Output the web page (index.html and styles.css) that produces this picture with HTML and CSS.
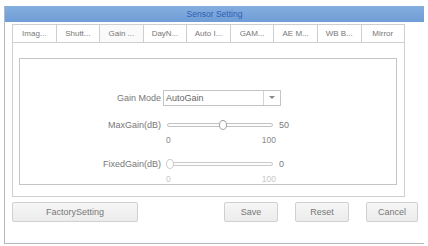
FILE: index.html
```html
<!DOCTYPE html>
<html lang="en">
<head>
    <meta charset="UTF-8">
    <title>Sensor Setting</title>
    <link rel="stylesheet" href="styles.css">
</head>
<body>
    <div class="window">
        <div class="titlebar">Sensor Setting</div>

        <div class="tabs">
            <div class="tab">Imag...</div>
            <div class="tab">Shutt...</div>
            <div class="tab active">Gain ...</div>
            <div class="tab">DayN...</div>
            <div class="tab">Auto I...</div>
            <div class="tab">GAM...</div>
            <div class="tab">AE M...</div>
            <div class="tab">WB B...</div>
            <div class="tab">Mirror</div>
        </div>

        <div class="panel">
            <div class="group">
                <div class="row row-select">
                    <label class="lbl">Gain Mode</label>
                    <div class="select">
                        <span class="select-text">AutoGain</span>
                        <span class="select-arrow"></span>
                    </div>
                </div>

                <div class="row row-slider">
                    <label class="lbl">MaxGain(dB)</label>
                    <div class="slider">
                        <div class="track"></div>
                        <div class="thumb" style="left: 50%;"></div>
                    </div>
                    <span class="value">50</span>
                </div>
                <div class="scale">
                    <span>0</span>
                    <span>100</span>
                </div>

                <div class="row row-slider">
                    <label class="lbl">FixedGain(dB)</label>
                    <div class="slider disabled">
                        <div class="track"></div>
                        <div class="thumb" style="left: 0%;"></div>
                    </div>
                    <span class="value">0</span>
                </div>
                <div class="scale disabled">
                    <span>0</span>
                    <span>100</span>
                </div>
            </div>
        </div>

        <div class="buttons">
            <button class="btn btn-factory">FactorySetting</button>
            <div class="spacer"></div>
            <button class="btn">Save</button>
            <button class="btn">Reset</button>
            <button class="btn btn-cancel">Cancel</button>
        </div>
    </div>
</body>
</html>
```

FILE: styles.css
```css
body {
    margin: 0;
    background-color: white;
    font-family: "Liberation Sans", Arial, sans-serif;
    color: #777;
}
.window {
    margin: 6px 0 0 4px;
    width: 420px;
    height: 238px;
    box-sizing: border-box;
    border-left: 1px solid #b8b8b8;
    border-bottom: 1px solid #b8b8b8;
}
.titlebar {
    height: 16px;
    line-height: 16px;
    background: linear-gradient(#84aee0, #709dd6);
    color: #2f60b0;
    font-size: 8.5px;
    text-align: center;
}
.tabs {
    display: flex;
    width: 393px;
    margin: 2px 0 0 7px;
}
.tab {
    flex: 1;
    height: 17px;
    line-height: 17px;
    border: 1px solid #cfcfcf;
    border-bottom: none;
    border-left: none;
    font-size: 8px;
    color: #777;
    text-align: center;
    white-space: nowrap;
    overflow: hidden;
}
.tab:first-child {
    border-left: 1px solid #cfcfcf;
}
.tab.active {
    background-color: #fafafa;
}
.panel {
    width: 393px;
    height: 155px;
    box-sizing: border-box;
    margin-left: 7px;
    padding: 15px 8px 0 6px;
    border: 1px solid #cfcfcf;
}
.group {
    width: 378px;
    height: 127px;
    box-sizing: border-box;
    border: 1px solid #c4c4c4;
    padding-top: 31px;
}
.row {
    display: flex;
    align-items: center;
}
.lbl {
    width: 141px;
    text-align: right;
    font-size: 9px;
    color: #777;
    white-space: nowrap;
}
.select {
    display: flex;
    width: 118px;
    height: 16px;
    box-sizing: border-box;
    margin-left: 2px;
    border: 1px solid #c4c4c4;
}
.select-text {
    flex: 1;
    font-size: 9px;
    line-height: 14px;
    padding-left: 2px;
    color: #666;
}
.select-arrow {
    width: 16px;
    border-left: 1px solid #d4d4d4;
    position: relative;
}
.select-arrow::after {
    content: "";
    position: absolute;
    left: 5px;
    top: 5px;
    border-left: 3px solid transparent;
    border-right: 3px solid transparent;
    border-top: 3px solid #888;
}
.row-slider {
    height: 12px;
    margin-top: 13px;
}
.slider {
    position: relative;
    width: 106px;
    height: 12px;
    margin-left: 6px;
}
.track {
    position: absolute;
    left: 0;
    right: 0;
    top: 4px;
    height: 4px;
    border: 1px solid #c2c2c2;
    border-radius: 3px;
    box-sizing: border-box;
    background-color: #fcfcfc;
}
.thumb {
    position: absolute;
    top: 1px;
    width: 8px;
    height: 10px;
    margin-left: -1px;
    box-sizing: border-box;
    border: 1px solid #a0a0a0;
    border-radius: 50%;
    background-color: white;
}
.slider.disabled .track,
.slider.disabled .thumb {
    border-color: #cacaca;
}
.value {
    font-size: 9px;
    margin-left: 6px;
    color: #777;
}
.scale {
    display: flex;
    justify-content: space-between;
    width: 110px;
    margin: 4px 0 0 146px;
    font-size: 8.5px;
    color: #888;
}
.scale.disabled {
    color: #c8c8c8;
}
.buttons {
    display: flex;
    margin: 5px 0 0 7px;
    width: 406px;
}
.spacer {
    flex: 1;
}
.btn {
    height: 20px;
    width: 54px;
    margin-left: 17px;
    padding: 0;
    border: 1px solid #d0d0d0;
    border-radius: 2px;
    background: linear-gradient(#f6f6f6, #ececec);
    font-family: "Liberation Sans", Arial, sans-serif;
    font-size: 9px;
    color: #777;
}
.btn-factory {
    width: 126px;
    margin-left: 0;
}
.btn-cancel {
    width: 52px;
}
```
